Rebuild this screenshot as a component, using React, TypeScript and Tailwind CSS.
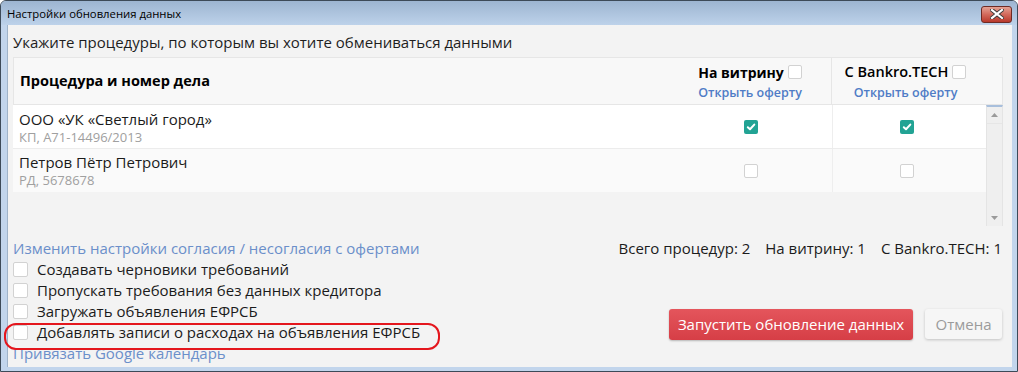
import React from "react";

function Box({ checked, size = 14 }: { checked?: boolean; size?: number }) {
  if (checked) {
    return (
      <span
        className="inline-flex items-center justify-center rounded-[2px] bg-[#22a394]"
        style={{ width: size, height: size }}
      >
        <svg width="10" height="10" viewBox="0 0 10 10">
          <path d="M1.8 5.2 L4 7.3 L8.3 2.6" fill="none" stroke="#fff" strokeWidth="2" strokeLinecap="round" strokeLinejoin="round" />
        </svg>
      </span>
    );
  }
  return (
    <span
      className="inline-block rounded-[2px] border border-[#d2d2d2] bg-white"
      style={{ width: size, height: size }}
    />
  );
}

export default function App() {
  return (
    <div className="relative w-[1018px] h-[372px] overflow-hidden rounded-t-[6px] border border-[#3d4a58] bg-[#c2d5ec] flex flex-col font-['Open_Sans','Noto_Sans',sans-serif] text-[#1b1b1b]">
      {/* title bar */}
      <div className="h-[24px] flex items-center justify-between pl-[6px] pr-[5px] bg-linear-to-b from-[#9db5d1] to-[#bdd2ea]">
        <span className="text-[11.3px] text-black leading-none mt-[1px]">Настройки обновления данных</span>
        <div className="w-[31px] h-[17px] mt-[2px] rounded-[3px] border border-[#6e2b24] bg-linear-to-b from-[#e3a194] via-[#d2695b] to-[#b8372a] flex items-center justify-center">
          <svg width="14" height="10" viewBox="0 0 14 10">
            <path d="M2 1 L12 9 M12 1 L2 9" stroke="#3b3b3b" strokeWidth="4" strokeLinecap="square" />
            <path d="M2 1 L12 9 M12 1 L2 9" stroke="#ffffff" strokeWidth="2.2" strokeLinecap="square" />
          </svg>
        </div>
      </div>

      {/* content */}
      <div className="flex-1 ml-[6px] mr-[5px] mb-[4px] bg-[#f3f3f3] border-l border-[#9fb3c9] pl-[5px] pr-[9px] pt-[7px] flex flex-col">
        <div className="text-[15px] leading-[20px] text-[#1e1e1e]">
          Укажите процедуры, по которым вы хотите обмениваться данными
        </div>

        {/* table */}
        <div className="mt-[5px] w-[990px] flex flex-col">
          {/* header */}
          <div className="h-[48px] grid grid-cols-[1fr_162px_148px_23px] bg-[#f8f8f8] border border-[#e6e6e6]">
            <div className="flex items-center pl-[6px] font-bold text-[14.5px] text-black">Процедура и номер дела</div>
            <div className="flex flex-col items-center pt-[4px]">
              <div className="flex items-center gap-[4px] h-[20px]">
                <span className="font-bold text-[14px] text-black">На витрину</span>
                <Box />
              </div>
              <span className="text-[12.5px] font-semibold text-[#4f7cc6] leading-[18px] mt-[2px]">Открыть оферту</span>
            </div>
            <div className="flex flex-col items-center pt-[4px] border-l border-[#e6e6e6]">
              <div className="flex items-center gap-[4px] h-[20px]">
                <span className="font-semibold text-[14.5px] text-black">С Bankro.TECH</span>
                <Box />
              </div>
              <span className="text-[12.5px] font-semibold text-[#4f7cc6] leading-[18px] mt-[2px]">Открыть оферту</span>
            </div>
            <div />
          </div>

          {/* body */}
          <div className="h-[121px] flex">
            <div className="w-[973px] flex flex-col">
              <div className="h-[44px] grid grid-cols-[1fr_162px_148px_6px] bg-white border-b border-[#ececec]">
                <div className="pl-[6px] pt-[4px]">
                  <div className="text-[15px] leading-[20px]">ООО «УК «Светлый город»</div>
                  <div className="text-[13px] leading-[16px] text-[#a0a0a0]">КП, А71-14496/2013</div>
                </div>
                <div className="flex items-center justify-center"><Box checked /></div>
                <div className="flex items-center justify-center border-l border-[#eeeeee]"><Box checked /></div>
                <div />
              </div>
              <div className="h-[43px] grid grid-cols-[1fr_162px_148px_6px] bg-[#fafafa]">
                <div className="pl-[6px] pt-[3px]">
                  <div className="text-[15px] leading-[20px]">Петров Пётр Петрович</div>
                  <div className="text-[13px] leading-[16px] text-[#a0a0a0]">РД, 5678678</div>
                </div>
                <div className="flex items-center justify-center"><Box /></div>
                <div className="flex items-center justify-center border-l border-[#eeeeee]"><Box /></div>
                <div />
              </div>
            </div>
            {/* scrollbar */}
            <div className="w-[17px] bg-[#efefef] border-l border-r border-[#e4e4e4] border-t-2 border-t-[#a8bfdc] flex flex-col justify-between">
              <div className="h-[17px] flex items-center justify-center border-b border-[#e6e6e6]">
                <svg width="7" height="4" viewBox="0 0 7 4"><path d="M0 4 L3.5 0 L7 4 Z" fill="#9a9a9a" /></svg>
              </div>
              <div className="h-[17px] flex items-center justify-center">
                <svg width="7" height="4" viewBox="0 0 7 4"><path d="M0 0 L3.5 4 L7 0 Z" fill="#9a9a9a" /></svg>
              </div>
            </div>
          </div>
        </div>

        {/* bottom */}
        <div className="flex justify-between pt-[12px]">
          <div className="flex flex-col text-[15px] leading-[21px]">
            <span className="text-[#6b8fca]">Изменить настройки согласия / несогласия с офертами</span>
            {[
              "Создавать черновики требований",
              "Пропускать требования без данных кредитора",
              "Загружать объявления ЕФРСБ",
              "Добавлять записи о расходах на объявления ЕФРСБ",
            ].map((t) => (
              <div key={t} className="flex items-center gap-[9px] h-[21px]">
                <Box size={15} />
                <span>{t}</span>
              </div>
            ))}
            <span className="text-[#6b8fca]">Привязать Google календарь</span>
          </div>
          <div className="flex flex-col items-end">
            <div className="flex gap-[15px] text-[15px] leading-[21px] pr-[1px]">
              <span>Всего процедур: 2</span>
              <span>На витрину: 1</span>
              <span>С Bankro.TECH: 1</span>
            </div>
            <div className="flex gap-[12px] mt-[50px] pr-[1px]">
              <div className="w-[244px] h-[31px] rounded-[3px] bg-linear-to-b from-[#e4555c] to-[#d63e46] shadow-[0_1px_2px_rgba(0,0,0,0.25)] flex items-center justify-center text-white text-[15px]">
                Запустить обновление данных
              </div>
              <div className="w-[77px] h-[30px] rounded-[3px] bg-[#f6f6f6] shadow-[0_1px_3px_rgba(0,0,0,0.2)] flex items-center justify-center text-[#9b9b9b] text-[15px]">
                Отмена
              </div>
            </div>
          </div>
        </div>
      </div>

      {/* red annotation */}
      <div className="absolute left-[3px] top-[322px] w-[436px] h-[27px] rounded-[12px] border-[2.5px] border-[#e4161d] pointer-events-none" />
    </div>
  );
}
